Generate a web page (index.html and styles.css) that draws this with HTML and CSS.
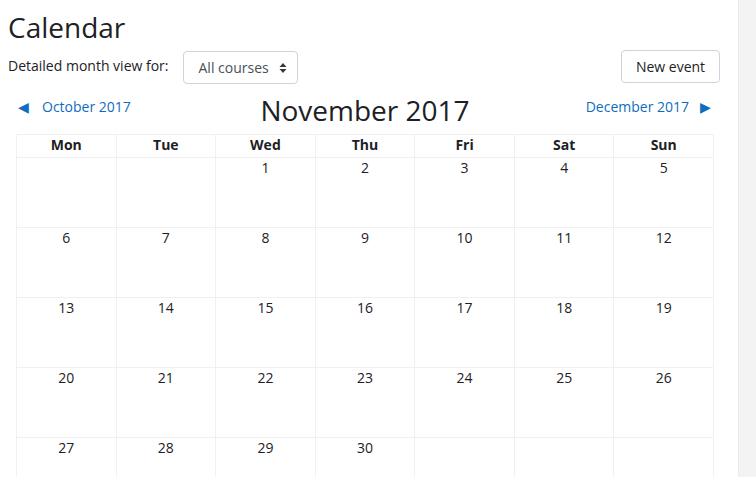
FILE: index.html
```html
<!DOCTYPE html>
<html lang="en">
<head>
<meta charset="utf-8">
<title>Calendar</title>
<link rel="stylesheet" href="styles.css">
</head>
<body>
<div class="page">
  <main class="main">
    <h2 class="title">Calendar</h2>
    <div class="controls">
      <div class="filter">
        <span class="filter-label">Detailed month view for:</span>
        <span class="select">All courses
          <svg class="caret" width="8" height="12" viewBox="0 0 8 12"><path d="M4 1 L7.5 5 H0.5 Z M4 11 L7.5 7 H0.5 Z" fill="#343a40"/></svg>
        </span>
      </div>
      <button class="btn">New event</button>
    </div>
    <section class="calendar">
      <div class="nav">
        <a class="nav-link prev" href="#"><span class="arrow">&#9664;</span>October 2017</a>
        <h2 class="month">November 2017</h2>
        <a class="nav-link next" href="#">December 2017<span class="arrow">&#9654;</span></a>
      </div>
      <div class="grid">
        <div class="head">Mon</div><div class="head">Tue</div><div class="head">Wed</div><div class="head">Thu</div><div class="head">Fri</div><div class="head">Sat</div><div class="head">Sun</div>
        <div class="day"></div><div class="day"></div><div class="day">1</div><div class="day">2</div><div class="day">3</div><div class="day">4</div><div class="day">5</div>
        <div class="day">6</div><div class="day">7</div><div class="day">8</div><div class="day">9</div><div class="day">10</div><div class="day">11</div><div class="day">12</div>
        <div class="day">13</div><div class="day">14</div><div class="day">15</div><div class="day">16</div><div class="day">17</div><div class="day">18</div><div class="day">19</div>
        <div class="day">20</div><div class="day">21</div><div class="day">22</div><div class="day">23</div><div class="day">24</div><div class="day">25</div><div class="day">26</div>
        <div class="day">27</div><div class="day">28</div><div class="day">29</div><div class="day">30</div><div class="day"></div><div class="day"></div><div class="day"></div>
      </div>
    </section>
  </main>
  <div class="gutter"></div>
</div>
</body>
</html>
```

FILE: styles.css
```css
* { box-sizing: border-box; }
html, body {
  margin: 0;
  padding: 0;
  background: #fff;
  font-family: "Open Sans", "Liberation Sans", sans-serif;
  color: #1d2125;
  font-size: 14px;
  overflow: hidden;
}
.page {
  display: flex;
  height: 477px;
}
.main {
  flex: 1;
  padding: 10px 18px 0 8px;
  min-width: 0;
}
.gutter {
  width: 18px;
  background: #f3f3f3;
  border-left: 1px solid #ebebeb;
}
.title {
  margin: 0;
  font-size: 28px;
  font-weight: 400;
  line-height: 34px;
  color: #1d2125;
}
.controls {
  display: flex;
  justify-content: space-between;
  align-items: flex-start;
  margin-top: 6px;
  height: 40px;
}
.filter {
  display: flex;
  align-items: center;
  padding-top: 1px;
}
.filter-label {
  margin-right: 14px;
  line-height: 20px;
  margin-top: -3px;
}
.select {
  display: inline-flex;
  align-items: center;
  height: 33px;
  width: 115px;
  padding: 0 10px 0 15px;
  border: 1px solid #ced4da;
  border-radius: 4px;
  color: #495057;
  justify-content: space-between;
}
.caret { margin-top: 1px; }
.btn {
  font-family: inherit;
  font-size: 14px;
  color: #1d2125;
  background: #fff;
  border: 1px solid #ced4da;
  border-radius: 4px;
  height: 33px;
  width: 99px;
  padding: 0;
}
.calendar {
  margin: 2px 6px 0 8px;
}
.nav {
  display: flex;
  justify-content: space-between;
  align-items: flex-start;
  height: 42px;
}
.nav-link {
  color: #0f6cbf;
  text-decoration: none;
  line-height: 20px;
  padding-top: 5px;
  flex: 1;
}
.next { text-align: right; }
.arrow {
  font-size: 14px;
  display: inline-block;
}
.prev .arrow { margin: 0 13px 0 2px; }
.next .arrow { margin: 0 3px 0 11px; }
.month {
  margin: 0;
  font-size: 28px;
  font-weight: 400;
  line-height: 36px;
  color: #1d2125;
}
.grid {
  display: grid;
  grid-template-columns: repeat(7, 1fr);
  grid-auto-rows: 70px;
  grid-template-rows: 23px;
  border-top: 1px solid #f0f0f0;
  border-left: 1px solid #f0f0f0;
}
.head, .day {
  border-right: 1px solid #f0f0f0;
  border-bottom: 1px solid #f0f0f0;
  text-align: center;
}
.head {
  font-weight: 700;
  line-height: 20px;
  padding-bottom: 2px;
}
.day {
  padding-top: 0;
  line-height: 20px;
}
```
